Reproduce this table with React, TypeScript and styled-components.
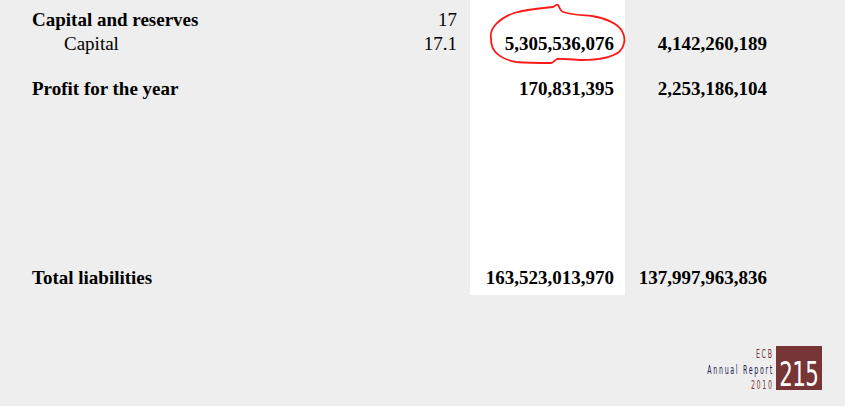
import React from "react";
import styled, { createGlobalStyle } from "styled-components";

const Global = createGlobalStyle`
  html, body { margin: 0; padding: 0; background: #eeeeee; }
  body { width: 845px; height: 406px; overflow: hidden; font-family: "Liberation Serif", "Times New Roman", serif; color: #000; }
`;

const Page = styled.div`
  display: flex;
  flex-direction: column;
  width: 845px;
  height: 406px;
`;

const Sheet = styled.div`
  position: relative;
  display: grid;
  grid-template-columns: 32px 390px 36px 12px 155px 142px;
  grid-template-rows: 8px 24px 24px 21px 24px 165px 24px 5px;
  font-size: 19px;
  line-height: 24px;
`;

const WhiteColumn = styled.div`
  grid-column: 5;
  grid-row: 1 / -1;
  background: #ffffff;
`;

const Label = styled.div<{ $row: number; $bold?: boolean; $indent?: boolean }>`
  grid-column: 2;
  grid-row: ${(p) => p.$row};
  font-weight: ${(p) => (p.$bold ? 700 : 400)};
  padding-left: ${(p) => (p.$indent ? "32px" : "0")};
  white-space: nowrap;
`;

const Note = styled.div<{ $row: number }>`
  grid-column: 3;
  grid-row: ${(p) => p.$row};
  text-align: right;
  padding-right: 1px;
`;

const Amount = styled.div<{ $row: number; $col: number }>`
  grid-column: ${(p) => p.$col};
  grid-row: ${(p) => p.$row};
  text-align: right;
  font-weight: 700;
  padding-right: ${(p) => (p.$col === 5 ? "11px" : "0")};
  white-space: nowrap;
`;

const Circle = styled.svg`
  position: absolute;
  left: 0;
  top: 0;
  pointer-events: none;
`;

const Footer = styled.div`
  display: flex;
  justify-content: flex-end;
  align-items: flex-start;
  gap: 4px;
  margin-top: 51px;
  padding-right: 23px;
`;

const Caption = styled.div`
  display: flex;
  flex-direction: column;
  align-items: flex-end;
  font-family: "DejaVu Sans Condensed", "DejaVu Sans", sans-serif;
  font-size: 12.5px;
  line-height: 15.5px;
  letter-spacing: 3px;
`;

const CaptionLine = styled.span<{ $navy?: boolean }>`
  color: ${(p) => (p.$navy ? "#1c1c4e" : "#7a3539")};
  display: inline-block;
  margin-right: -1.7px;
  transform: scaleX(0.56);
  transform-origin: right center;
  white-space: nowrap;
`;

const PageBox = styled.div`
  width: 46px;
  height: 44px;
  background: #773536;
  display: flex;
  align-items: flex-end;
  justify-content: center;
  padding-bottom: 2px;
  box-sizing: border-box;
`;

const PageNumber = styled.span`
  font-family: "DejaVu Sans Condensed", "DejaVu Sans", sans-serif;
  color: #ffffff;
  font-size: 34px;
  line-height: 28px;
  letter-spacing: -1px;
  display: inline-block;
  transform: scaleX(0.7);
  white-space: nowrap;
`;

export default function App() {
  return (
    <>
      <Global />
      <Page>
        <Sheet>
          <WhiteColumn />
          <Label $row={2} $bold>Capital and reserves</Label>
          <Note $row={2}>17</Note>
          <Label $row={3} $indent>Capital</Label>
          <Note $row={3}>17.1</Note>
          <Amount $row={3} $col={5}>5,305,536,076</Amount>
          <Amount $row={3} $col={6}>4,142,260,189</Amount>
          <Label $row={5} $bold>Profit for the year</Label>
          <Amount $row={5} $col={5}>170,831,395</Amount>
          <Amount $row={5} $col={6}>2,253,186,104</Amount>
          <Label $row={7} $bold>Total liabilities</Label>
          <Amount $row={7} $col={5}>163,523,013,970</Amount>
          <Amount $row={7} $col={6}>137,997,963,836</Amount>
          <Circle width="845" height="80" viewBox="0 0 845 80">
            <path
              d="M491 38 C489 28 500 18 514 13 C528 9 542 8 553 7 C556 5 557 4 558 5 C560 8 560 11 563 12 C572 15 582 15 592 16 C606 18 618 24 622 31 C626 38 625 46 619 52 C612 57 598 60 582 60 C572 60 562 58 557 59 C554 60 554 63 551 63 C540 63 528 63 516 62 C503 60 494 53 492 46 C491 43 491 40 491 38 Z"
              fill="none"
              stroke="#ff1a1a"
              strokeWidth="1.8"
              strokeLinejoin="round"
            />
          </Circle>
        </Sheet>
        <Footer>
          <Caption>
            <CaptionLine>ECB</CaptionLine>
            <CaptionLine $navy>Annual Report</CaptionLine>
            <CaptionLine>2010</CaptionLine>
          </Caption>
          <PageBox>
            <PageNumber>215</PageNumber>
          </PageBox>
        </Footer>
      </Page>
    </>
  );
}
